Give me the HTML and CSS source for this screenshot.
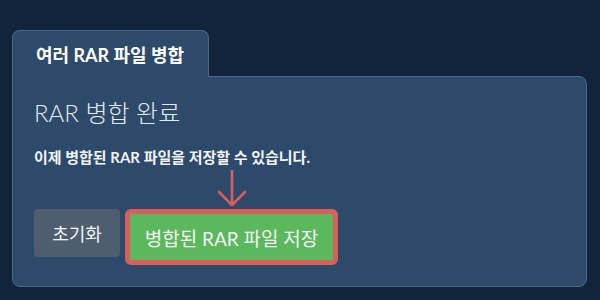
FILE: index.html
```html
<!DOCTYPE html>
<html>
<head>
  <meta charset="UTF-8">
  <link rel="stylesheet" href="styles.css">
</head>
<body>
  <div class="merge-card">
    <div class="tab">여러 RAR 파일 병합</div>
    <div class="panel">
      <div class="panel-title">RAR 병합 완료</div>
      <div class="panel-text">이제 병합된 RAR 파일을 저장할 수 있습니다.</div>
      <div class="actions">
        <button class="btn btn-reset">초기화</button>
        <div class="save-wrap">
          <svg class="hint-arrow" width="30" height="38" viewBox="0 0 30 38">
            <path d="M15 1 V35 M2 22 L15 35 L28 22" fill="none" stroke="#d9605a" stroke-width="2.6" stroke-linecap="round" stroke-linejoin="round"/>
          </svg>
          <button class="btn btn-save">병합된 RAR 파일 저장</button>
        </div>
      </div>
    </div>
  </div>
</body>
</html>
```

FILE: styles.css
```css
* {
  margin: 0;
  padding: 0;
  box-sizing: border-box;
}

body {
  width: 600px;
  height: 300px;
  background: #12243a;
  font-family: Lato, "Noto Sans CJK KR", sans-serif;
  color: #ffffff;
  padding: 30px 13px 0 12px;
  overflow: hidden;
}

.merge-card {
  display: flex;
  flex-direction: column;
  align-items: flex-start;
}

.tab {
  position: relative;
  z-index: 1;
  height: 47px;
  margin-bottom: -1px;
  padding: 0 24px 0 23px;
  display: flex;
  align-items: center;
  background: #2d4a6a;
  border: 1px solid #4c6888;
  border-bottom: none;
  border-radius: 8px 8px 0 0;
  font-size: 18px;
  font-weight: 700;
}

.panel {
  width: 100%;
  height: 211px;
  background: #2d4a6a;
  border: 1px solid #4c6888;
  border-radius: 0 8px 8px 8px;
  padding: 21px 21px;
}

.panel-title {
  font-size: 24px;
  font-weight: 300;
  line-height: 30px;
  color: #e6ebf1;
}

.panel-text {
  margin-top: 19px;
  font-size: 15px;
  font-weight: 700;
  line-height: 20px;
  color: #f2f4f7;
}

.actions {
  display: flex;
  align-items: flex-start;
  gap: 5px;
  margin-top: 42px;
}

.btn {
  font-family: inherit;
  font-size: 18px;
  color: #f2f4f7;
  border: none;
  cursor: pointer;
}

.btn-reset {
  width: 86px;
  height: 48px;
  background: #4e5e6e;
  border-radius: 4px;
}

.save-wrap {
  position: relative;
}

.btn-save {
  width: 213px;
  height: 56px;
  background: #5cb85c;
  border: 5px solid #d9605a;
  border-radius: 6px;
  font-size: 19px;
}

.hint-arrow {
  position: absolute;
  left: 50%;
  bottom: 100%;
  margin-bottom: 1px;
  transform: translateX(-50%);
}
```
